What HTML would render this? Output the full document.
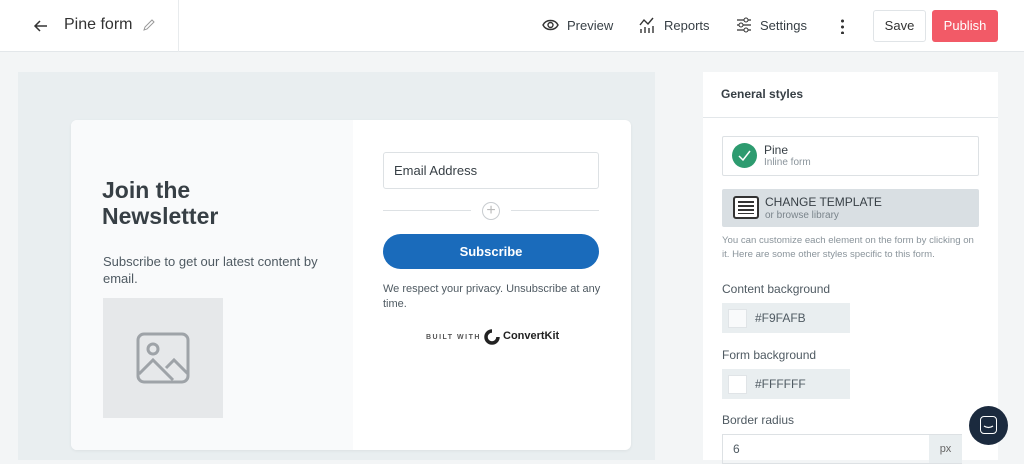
<!DOCTYPE html>
<html><head><style>
*{box-sizing:border-box;margin:0;padding:0}
body{width:1024px;height:460px;overflow:hidden;background:#f3f5f6;font-family:"Liberation Sans",sans-serif;color:#373f45;position:relative}
.abs{position:absolute}
.top{left:0;top:0;width:1024px;height:52px;background:#fff;border-bottom:1px solid #e3e7ea}
.nav{font-size:13px;color:#373f45;top:18px}
</style></head><body>
<div class="abs top">
  <div class="abs" style="left:178px;top:0;width:1px;height:52px;background:#e8ebed"></div>
  <svg class="abs" style="left:33px;top:18px" width="16" height="16" viewBox="0 0 16 16"><path d="M14 8H2M7 3L2 8l5 5" stroke="#333" stroke-width="1.5" fill="none"/></svg>
  <div class="abs" style="left:64px;top:16px;font-size:16px;color:#333">Pine form</div>
  <svg class="abs" style="left:142px;top:18px" width="14" height="14" viewBox="0 0 14 14"><path d="M2 12l1-3 7-7 2 2-7 7z" stroke="#999" fill="none"/></svg>
  <svg class="abs" style="left:542px;top:18px" width="17" height="14" viewBox="0 0 17 14"><path d="M1 7C4 1 13 1 16 7C13 13 4 13 1 7z" stroke="#333" stroke-width="1.4" fill="none"/><circle cx="8.5" cy="7" r="2.5" stroke="#333" stroke-width="1.4" fill="none"/></svg>
  <div class="abs nav" style="left:567px">Preview</div>
  <svg class="abs" style="left:638px;top:16px" width="18" height="18" viewBox="0 0 18 18"><path d="M2 9l4-5 4 4 5-6M3 17v-4M7 17v-6M11 17v-5M15 17v-7" stroke="#333" stroke-width="1.4" fill="none"/></svg>
  <div class="abs nav" style="left:664px">Reports</div>
  <svg class="abs" style="left:736px;top:17px" width="16" height="16" viewBox="0 0 16 16"><path d="M1 3h14M1 8h14M1 13h14" stroke="#333" stroke-width="1.3"/><circle cx="10" cy="3" r="2" fill="#fff" stroke="#333"/><circle cx="5" cy="8" r="2" fill="#fff" stroke="#333"/><circle cx="10" cy="13" r="2" fill="#fff" stroke="#333"/></svg>
  <div class="abs nav" style="left:760px">Settings</div>
  <div class="abs" style="left:841px;top:18px;width:3px;height:16px;background:radial-gradient(circle,#333 1.4px,transparent 1.6px) 0 0/3px 6px"></div>
  <div class="abs" style="left:873px;top:10px;width:53px;height:32px;border:1px solid #e0e4e7;border-radius:3px;font-size:13px;text-align:center;line-height:30px;color:#333">Save</div>
  <div class="abs" style="left:932px;top:10px;width:66px;height:32px;background:#f25a67;border-radius:3px;font-size:13px;text-align:center;line-height:32px;color:#fff">Publish</div>
</div>
<div class="abs" style="left:18px;top:72px;width:637px;height:388px;background:#e9eef0"></div>
<div class="abs" style="left:71px;top:120px;width:560px;height:330px;background:#fff;border-radius:6px;overflow:hidden;box-shadow:0 1px 3px rgba(0,0,0,.06)">
  <div class="abs" style="left:0;top:0;width:282px;height:330px;background:#f9fafb"></div>
  <div class="abs" style="left:31px;top:57px;font-size:23px;font-weight:bold;line-height:26px;color:#373f45">Join the<br>Newsletter</div>
  <div class="abs" style="left:32px;top:133px;font-size:13px;line-height:17px;color:#4f5a62;width:230px">Subscribe to get our latest content by email.</div>
  <div class="abs" style="left:32px;top:178px;width:120px;height:120px;background:#e6e8ea"></div>
  <svg class="abs" style="left:65px;top:212px" width="54" height="52" viewBox="0 0 54 52"><rect x="2" y="2" width="50" height="48" rx="6" stroke="#9ea3a8" stroke-width="3" fill="none"/><circle cx="17" cy="17" r="5" stroke="#9ea3a8" stroke-width="3" fill="none"/><path d="M3 42l14-14 20 20M30 36l8-8 14 14" stroke="#9ea3a8" stroke-width="3" fill="none"/></svg>
  <div class="abs" style="left:312px;top:32px;width:216px;height:37px;border:1px solid #dde1e4;border-radius:3px;font-size:13px;line-height:35px;padding-left:10px;color:#373f45">Email Address</div>
  <div class="abs" style="left:312px;top:90px;width:88px;height:1px;background:#dde1e4"></div>
  <div class="abs" style="left:440px;top:90px;width:88px;height:1px;background:#dde1e4"></div>
  <div class="abs" style="left:411px;top:82px;width:18px;height:18px;border:1px solid #c8ccd0;border-radius:50%;text-align:center;line-height:15px;color:#bbb;font-size:16px">+</div>
  <div class="abs" style="left:312px;top:114px;width:216px;height:35px;background:#1a6bbb;border-radius:18px;color:#fff;font-weight:bold;font-size:13px;text-align:center;line-height:35px">Subscribe</div>
  <div class="abs" style="left:312px;top:162px;width:220px;font-size:11px;line-height:15px;color:#4f5a62">We respect your privacy. Unsubscribe at any time.</div>
  <div class="abs" style="left:355px;top:214px;font-size:7px;letter-spacing:1.5px;color:#555;font-weight:bold">BUILT WITH</div>
  <svg class="abs" style="left:413px;top:209px" width="16" height="16" viewBox="0 0 16 16"><path d="M8 2a6 6 0 1 0 6 6" stroke="#222" stroke-width="3.5" fill="none"/></svg>
  <div class="abs" style="left:432px;top:210px;font-size:11px;color:#222;font-weight:bold">ConvertKit</div>
</div>
<div class="abs" style="left:703px;top:72px;width:295px;height:388px;background:#fff">
  <div class="abs" style="left:18px;top:15px;font-size:12px;color:#373f45;font-weight:bold">General styles</div>
  <div class="abs" style="left:0;top:45px;width:295px;height:1px;background:#e3e7ea"></div>
  <div class="abs" style="left:19px;top:64px;width:257px;height:40px;border:1px solid #dde1e4;border-radius:2px"></div>
  <div class="abs" style="left:29px;top:71px;width:25px;height:25px;border-radius:50%;background:#2d9b6f"></div>
  <svg class="abs" style="left:35px;top:78px" width="13" height="11" viewBox="0 0 13 11"><path d="M1 6l4 4 7-9" stroke="#fff" stroke-width="1.5" fill="none"/></svg>
  <div class="abs" style="left:61px;top:71px;font-size:12px;color:#373f45">Pine</div>
  <div class="abs" style="left:61px;top:85px;font-size:10px;color:#8a949b">Inline form</div>
  <div class="abs" style="left:19px;top:117px;width:257px;height:38px;background:#d9dfe3;border-radius:2px"></div>
  <div class="abs" style="left:30px;top:124px;width:26px;height:23px;border:2px solid #333;border-radius:3px;background:#fff"></div>
  <div class="abs" style="left:35px;top:129px;width:16px;height:13px;background:repeating-linear-gradient(#333 0 2px,transparent 2px 4px)"></div>
  <div class="abs" style="left:62px;top:123px;font-size:12px;color:#373f45">CHANGE TEMPLATE</div>
  <div class="abs" style="left:62px;top:138px;font-size:10px;color:#7a848b">or browse library</div>
  <div class="abs" style="left:19px;top:162px;width:260px;font-size:9.6px;line-height:14px;color:#8a949b">You can customize each element on the form by clicking on it. Here are some other styles specific to this form.</div>
  <div class="abs" style="left:19px;top:210px;font-size:12px;color:#4f5a62">Content background</div>
  <div class="abs" style="left:19px;top:231px;width:128px;height:30px;background:#e9eef0"></div>
  <div class="abs" style="left:25px;top:237px;width:19px;height:19px;background:#f9fafb;border:1px solid #e0e4e7"></div>
  <div class="abs" style="left:52px;top:239px;font-size:12px;color:#4f5a62">#F9FAFB</div>
  <div class="abs" style="left:19px;top:276px;font-size:12px;color:#4f5a62">Form background</div>
  <div class="abs" style="left:19px;top:297px;width:128px;height:30px;background:#e9eef0"></div>
  <div class="abs" style="left:25px;top:303px;width:19px;height:19px;background:#fff;border:1px solid #e0e4e7"></div>
  <div class="abs" style="left:52px;top:305px;font-size:12px;color:#4f5a62">#FFFFFF</div>
  <div class="abs" style="left:19px;top:341px;font-size:12px;color:#4f5a62">Border radius</div>
  <div class="abs" style="left:19px;top:362px;width:240px;height:30px;border:1px solid #dde1e4"></div>
  <div class="abs" style="left:226px;top:363px;width:33px;height:28px;background:#e9eef0;font-size:11px;text-align:center;line-height:28px;color:#666">px</div>
  <div class="abs" style="left:30px;top:370px;font-size:12px;color:#4f5a62">6</div>
</div>
<div class="abs" style="left:969px;top:406px;width:39px;height:39px;border-radius:50%;background:#1b2a3e"></div>
<div class="abs" style="left:980px;top:416px;width:17px;height:18px;border:1.5px solid #fff;border-radius:4px"></div>
<svg class="abs" style="left:983px;top:425px" width="11" height="5" viewBox="0 0 11 5"><path d="M1 1q4.5 3 9 0" stroke="#fff" stroke-width="1.3" fill="none"/></svg>
</body></html>
